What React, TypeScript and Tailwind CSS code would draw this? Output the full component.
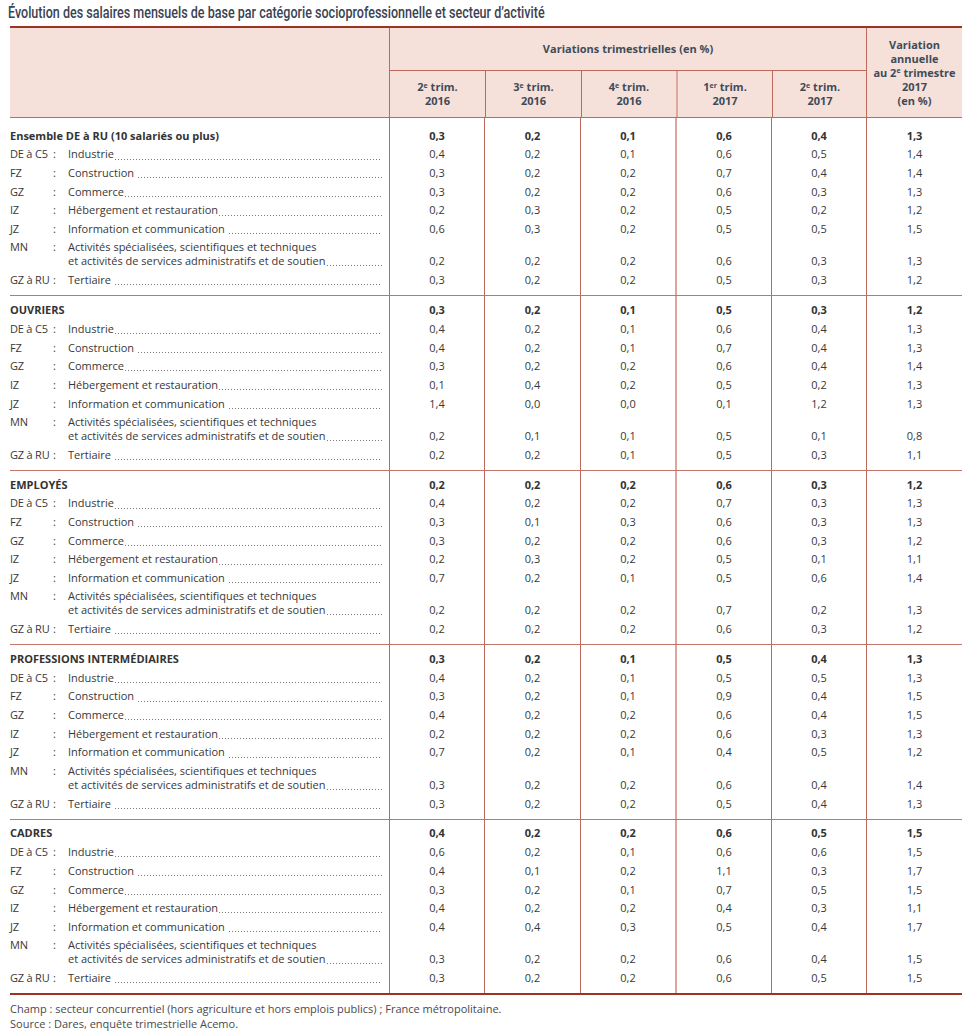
const sectors = [
  { code: 'DE à C5', label: 'Industrie', sp: false },
  { code: 'FZ', label: 'Construction', sp: true },
  { code: 'GZ', label: 'Commerce', sp: false },
  { code: 'IZ', label: 'Hébergement et restauration', sp: false },
  { code: 'JZ', label: 'Information et communication', sp: true },
  {
    code: 'MN',
    label: 'Activités spécialisées, scientifiques et techniques',
    label2: 'et activités de services administratifs et de soutien',
    sp: false,
  },
  { code: 'GZ à RU', label: 'Tertiaire', sp: true },
];

const sections = [
  {
    title: 'Ensemble DE à RU (10 salariés ou plus)',
    total: ['0,3', '0,2', '0,1', '0,6', '0,4', '1,3'],
    rows: [
      ['0,4', '0,2', '0,1', '0,6', '0,5', '1,4'],
      ['0,3', '0,2', '0,2', '0,7', '0,4', '1,4'],
      ['0,3', '0,2', '0,2', '0,6', '0,3', '1,3'],
      ['0,2', '0,3', '0,2', '0,5', '0,2', '1,2'],
      ['0,6', '0,3', '0,2', '0,5', '0,5', '1,5'],
      ['0,2', '0,2', '0,2', '0,6', '0,3', '1,3'],
      ['0,3', '0,2', '0,2', '0,5', '0,3', '1,2'],
    ],
  },
  {
    title: 'OUVRIERS',
    total: ['0,3', '0,2', '0,1', '0,5', '0,3', '1,2'],
    rows: [
      ['0,4', '0,2', '0,1', '0,6', '0,4', '1,3'],
      ['0,4', '0,2', '0,1', '0,7', '0,4', '1,3'],
      ['0,3', '0,2', '0,2', '0,6', '0,4', '1,4'],
      ['0,1', '0,4', '0,2', '0,5', '0,2', '1,3'],
      ['1,4', '0,0', '0,0', '0,1', '1,2', '1,3'],
      ['0,2', '0,1', '0,1', '0,5', '0,1', '0,8'],
      ['0,2', '0,2', '0,1', '0,5', '0,3', '1,1'],
    ],
  },
  {
    title: 'EMPLOYÉS',
    total: ['0,2', '0,2', '0,2', '0,6', '0,3', '1,2'],
    rows: [
      ['0,4', '0,2', '0,2', '0,7', '0,3', '1,3'],
      ['0,3', '0,1', '0,3', '0,6', '0,3', '1,3'],
      ['0,3', '0,2', '0,2', '0,6', '0,3', '1,2'],
      ['0,2', '0,3', '0,2', '0,5', '0,1', '1,1'],
      ['0,7', '0,2', '0,1', '0,5', '0,6', '1,4'],
      ['0,2', '0,2', '0,2', '0,7', '0,2', '1,3'],
      ['0,2', '0,2', '0,2', '0,6', '0,3', '1,2'],
    ],
  },
  {
    title: 'PROFESSIONS INTERMÉDIAIRES',
    total: ['0,3', '0,2', '0,1', '0,5', '0,4', '1,3'],
    rows: [
      ['0,4', '0,2', '0,1', '0,5', '0,5', '1,3'],
      ['0,3', '0,2', '0,1', '0,9', '0,4', '1,5'],
      ['0,4', '0,2', '0,2', '0,6', '0,4', '1,5'],
      ['0,2', '0,2', '0,2', '0,6', '0,3', '1,3'],
      ['0,7', '0,2', '0,1', '0,4', '0,5', '1,2'],
      ['0,3', '0,2', '0,2', '0,6', '0,4', '1,4'],
      ['0,3', '0,2', '0,2', '0,5', '0,4', '1,3'],
    ],
  },
  {
    title: 'CADRES',
    total: ['0,4', '0,2', '0,2', '0,6', '0,5', '1,5'],
    rows: [
      ['0,6', '0,2', '0,1', '0,6', '0,6', '1,5'],
      ['0,4', '0,1', '0,2', '1,1', '0,3', '1,7'],
      ['0,3', '0,2', '0,1', '0,7', '0,5', '1,5'],
      ['0,4', '0,2', '0,2', '0,4', '0,3', '1,1'],
      ['0,4', '0,4', '0,3', '0,5', '0,4', '1,7'],
      ['0,3', '0,2', '0,2', '0,6', '0,4', '1,5'],
      ['0,3', '0,2', '0,2', '0,6', '0,5', '1,5'],
    ],
  },
];

// border style per data column (the 1er trim. 2017 one is a wider, paler rule)
const colBorder = [
  'border-l border-[#bb6a5c]',
  'border-l border-[#bb6a5c]',
  'border-l border-[#bb6a5c]',
  'border-l-2 border-[#dba79e]',
  'border-l border-[#bb6a5c]',
  'border-l border-[#bb6a5c]',
];

const subHeads = [
  { n: '2', sup: 'e', y: '2016' },
  { n: '3', sup: 'e', y: '2016' },
  { n: '4', sup: 'e', y: '2016' },
  { n: '1', sup: 'er', y: '2017' },
  { n: '2', sup: 'e', y: '2017' },
];

const grid = 'grid grid-cols-[379px_95px_96px_95px_96px_95px_96px]';
const dots =
  'h-px flex-1 bg-[linear-gradient(to_right,#7a7a7a_1px,transparent_1px)] bg-[length:3px_1px] bg-repeat-x';

function Section({ s, first }: { s: (typeof sections)[number]; first: boolean }) {
  const pad = first ? 'pt-[8.65px] pb-[5.65px]' : 'pt-[4.65px] pb-[5.65px]';
  return (
    <div className={`${grid} ${first ? '' : 'border-t border-[#c27568]'}`}>
      <div className={`pr-[7px] ${pad}`}>
        <div className="flex h-[18.7px] items-center font-bold text-[#333]">{s.title}</div>
        {sectors.map((sec) => (
          <div
            key={sec.code}
            className={sec.label2 ? 'flex h-[32.35px] pt-[1.65px]' : 'flex h-[18.7px] items-center'}
          >
            <span
              className={`w-[43px] shrink-0 tracking-[-0.2px] ${sec.label2 ? 'h-[14px] leading-[14px]' : ''}`}
            >
              {sec.code}
            </span>
            <span className={`w-[15px] shrink-0 ${sec.label2 ? 'h-[14px] leading-[14px]' : ''}`}>:</span>
            {sec.label2 ? (
              <div className="flex flex-1 flex-col">
                <div className="h-[14px] leading-[14px]">{sec.label}</div>
                <div className="flex h-[14px] leading-[14px]">
                  <span>{sec.label2}</span>
                  <span className={`mt-[11px] ml-[1px] ${dots}`} />
                </div>
              </div>
            ) : (
              <>
                <span>{sec.label}</span>
                <span className={`mt-[9px] self-center ${dots} ${sec.sp ? 'ml-[4px]' : 'ml-[1px]'}`} />
              </>
            )}
          </div>
        ))}
      </div>
      {colBorder.map((b, ci) => (
        <div key={ci} className={`${b} ${pad} text-center`}>
          <div className="flex h-[18.7px] items-center justify-center font-bold text-[#333]">
            {s.total[ci]}
          </div>
          {s.rows.map((r, ri) =>
            ri === 5 ? (
              <div key={ri} className="h-[32.35px] pt-[15.65px]">
                <div className="h-[14px] leading-[14px]">{r[ci]}</div>
              </div>
            ) : (
              <div key={ri} className="flex h-[18.7px] items-center justify-center">
                {r[ci]}
              </div>
            ),
          )}
        </div>
      ))}
    </div>
  );
}

export default function App() {
  return (
    <div className="min-h-[1034px] w-[975px] overflow-hidden bg-white px-[10px] font-['Open_Sans','Noto_Sans',sans-serif] text-[11px] text-[#383838]">
      <div className="-ml-[2px] flex h-[26px] items-center pt-[1px]">
        <span className="origin-left scale-x-[0.76] whitespace-nowrap font-['Roboto','Liberation_Sans',sans-serif] text-[16.5px] font-medium text-[#3a4352]">
          Évolution des salaires mensuels de base par catégorie socioprofessionnelle et secteur d’activité
        </span>
      </div>
      <div className="w-[952px]">
        {/* header */}
        <div className="grid h-[92px] grid-cols-[379px_477px_96px] border-t-2 border-b border-t-[#9c3325] border-b-[#bb6a5c] bg-[#f6e1da] font-bold leading-[14px] text-[#404b59]">
          <div />
          <div className="flex flex-col border-l border-[#bb6a5c]">
            <div className="flex h-[43px] items-center justify-center border-b border-[#bb6a5c]">
              Variations trimestrielles (en %)
            </div>
            <div className="grid flex-1 grid-cols-[95px_96px_95px_96px_95px]">
              {subHeads.map((h, i) => (
                <div
                  key={i}
                  className={`flex flex-col items-center justify-center ${
                    i === 0 ? '' : i === 3 ? 'border-l-2 border-[#dba79e]' : 'border-l border-[#bb6a5c]'
                  }`}
                >
                  <div>
                    {h.n}
                    <sup className="text-[7px]">{h.sup}</sup> trim.
                  </div>
                  <div>{h.y}</div>
                </div>
              ))}
            </div>
          </div>
          <div className="flex flex-col items-center justify-center border-l border-[#bb6a5c] text-center">
            <div>Variation</div>
            <div>annuelle</div>
            <div>
              au 2<sup className="text-[7px]">e</sup> trimestre
            </div>
            <div>2017</div>
            <div>(en %)</div>
          </div>
        </div>
        {sections.map((s, i) => (
          <Section key={s.title} s={s} first={i === 0} />
        ))}
        <div className="h-[2px] bg-[#9c3325]" />
      </div>
      <div className="mt-[6px] leading-[15px] text-[#4a4a4a]">
        <div>Champ : secteur concurrentiel (hors agriculture et hors emplois publics) ; France métropolitaine.</div>
        <div>Source : Dares, enquête trimestrielle Acemo.</div>
      </div>
    </div>
  );
}
